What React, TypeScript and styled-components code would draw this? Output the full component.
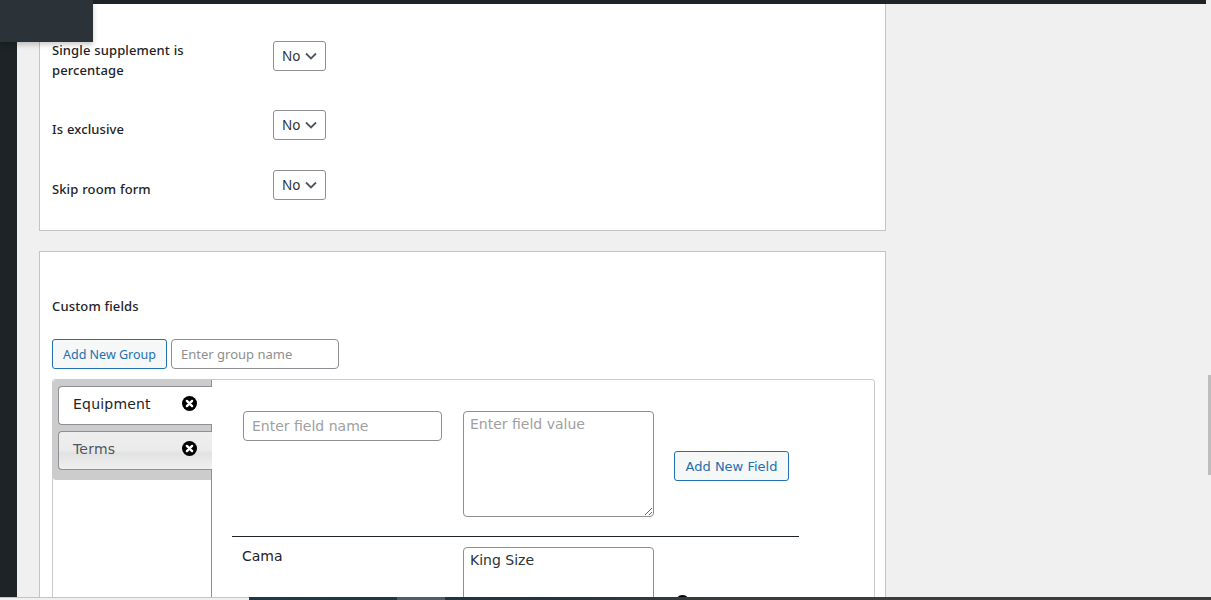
import React from "react";
import styled, { createGlobalStyle } from "styled-components";

const Global = createGlobalStyle`
  html, body { margin: 0; height: 600px; overflow: hidden; background: #f0f0f1; }
  body { font-family: "Noto Sans", sans-serif; color: #1d2327; font-size: 13px; }
  * { box-sizing: border-box; }
`;

const Page = styled.div`
  position: relative;
  display: flex;
  width: 1211px;
  height: 600px;
  overflow: hidden;
  background: #f0f0f1;
`;
const Sidebar = styled.div`
  width: 17px;
  flex: none;
  background: #1d2327;
`;
const Main = styled.main`
  width: 847px;
  margin-left: 22px;
  flex: none;
`;
const TopBar = styled.div`
  position: absolute;
  left: 0;
  top: 0;
  width: 1206px;
  height: 4px;
  background: #1d2327;
`;
const Flyout = styled.div`
  position: absolute;
  left: 0;
  top: 0;
  width: 93px;
  height: 42px;
  background: #2c3338;
  box-shadow: 0 3px 5px rgba(0, 0, 0, 0.2);
`;
const ScrollThumb = styled.div`
  position: absolute;
  right: 0;
  top: 375px;
  width: 3px;
  height: 100px;
  background: #bdbdbd;
`;
const BottomBar = styled.div`
  position: absolute;
  left: 0;
  bottom: 0;
  width: 100%;
  height: 3px;
  background: #f0f0f1;
  border-top: 1px solid #c3c4c7;
`;
const BottomDark = styled.div`
  position: absolute;
  left: 249px;
  right: 0;
  top: -1px;
  height: 3px;
  background: linear-gradient(90deg, #1f3a47 0, #23343d 30%, #3c3c3c 50%, #3c3c3c 100%);
`;
const BottomThumb = styled.div`
  position: absolute;
  left: 397px;
  top: -1px;
  width: 48px;
  height: 3px;
  background: #4f5f68;
`;

const Card = styled.section`
  background: #fff;
  border: 1px solid #c3c4c7;
`;
const SettingsCard = styled(Card)`
  margin-top: 4px;
  height: 227px;
  border-top: 0;
  padding: 16px 12px 0;
  display: flex;
  flex-direction: column;
`;
const FieldsCard = styled(Card)`
  margin-top: 20px;
  height: 400px;
  padding: 0 10px 0 12px;
`;
const Row = styled.div<{ $h: number }>`
  display: grid;
  grid-template-columns: 221px auto;
  justify-content: start;
  align-items: start;
  height: ${(p) => p.$h}px;
  padding-top: 20px;
`;
const Label = styled.div`
  font-weight: 500;
  font-size: 13px;
  line-height: 20px;
  width: 150px;
  letter-spacing: 0.1px;
  word-spacing: 0.4px;
`;
const SelectBox = styled.div<{ $offset: number }>`
  width: 53px;
  height: 30px;
  margin-top: ${(p) => p.$offset}px;
  border: 1px solid #8c8f94;
  border-radius: 3px;
  display: flex;
  align-items: center;
  justify-content: space-between;
  padding: 0 8px 0 8px;
  font-size: 13.5px;
  color: #2c3338;
  background: #fff;
`;
const Chevron = styled.svg`
  width: 12px;
  height: 8px;
  flex: none;
`;
const SectionTitle = styled.h3`
  margin: 0;
  padding-top: 44px;
  font-weight: 500;
  font-size: 13px;
  letter-spacing: 0.15px;
  line-height: 20px;
  height: 87px;
`;
const GroupBar = styled.div`
  display: flex;
  gap: 4px;
  height: 30px;
`;
const Button = styled.button`
  height: 30px;
  padding: 0;
  border: 1px solid #2271b1;
  border-radius: 3px;
  background: #f6f7f7;
  color: #2271b1;
  font-family: "Noto Sans", sans-serif;
  font-size: 12.5px;
`;
const GroupButton = styled(Button)`
  width: 115px;
`;
const FieldButton = styled(Button)`
  width: 115px;
  margin-top: 40px;
  font-family: "DejaVu Sans", sans-serif;
  font-size: 13px;
`;
const GroupInput = styled.input`
  width: 168px;
  height: 30px;
  border: 1px solid #8c8f94;
  border-radius: 4px;
  padding: 0 9px;
  font-family: "Noto Sans", sans-serif;
  font-size: 13px;
  &::placeholder { color: #8f8f8f; opacity: 1; }
`;
const Tabs = styled.div`
  margin-top: 10px;
  height: 300px;
  border: 1px solid #ccc;
  border-radius: 3px 3px 0 0;
  display: flex;
`;
const TabColumn = styled.div`
  width: 159px;
  flex: none;
  border-right: 1px solid #8c8f94;
`;
const TabList = styled.div`
  height: 100px;
  background: #ccc;
  border-radius: 3px 0 0 3px;
  padding: 6px 0 0 5px;
  display: flex;
  flex-direction: column;
  gap: 6px;
`;
const Tab = styled.div<{ $active?: boolean }>`
  height: 39px;
  margin-right: -1px;
  display: flex;
  align-items: flex-start;
  justify-content: space-between;
  padding: 7px 15px 0 14px;
  border: 1px solid #8c8f94;
  border-right: 0;
  border-radius: 4px 0 0 4px;
  background: ${(p) => (p.$active ? "#fff" : "linear-gradient(180deg, #eeeeee 0%, #ebebeb 48%, #e2e2e2 58%, #f0f0f0 100%)")};
  color: ${(p) => (p.$active ? "#1d2327" : "#50575e")};
  font-family: "DejaVu Sans", sans-serif;
  font-size: 14px;
  letter-spacing: 0.2px;
  line-height: 20px;
`;
const CloseIcon = styled.svg`
  width: 15px;
  height: 15px;
  display: block;
  flex: none;
  margin-top: 2px;
`;
const Pane = styled.div`
  flex: 1;
  min-width: 0;
  padding: 31px 0 0 20px;
`;
const FieldRow = styled.div`
  display: flex;
  align-items: flex-start;
  padding: 0 0 0 11px;
`;
const FieldInput = styled.input`
  width: 199px;
  height: 30px;
  margin-right: 21px;
  border: 1px solid #8c8f94;
  border-radius: 4px;
  padding: 0 8px;
  font-family: "DejaVu Sans", sans-serif;
  font-size: 14px;
  &::placeholder { color: #a0a0a0; opacity: 1; }
`;
const FieldValue = styled.textarea`
  width: 191px;
  height: 106px;
  margin: 0 20px 0 0;
  border: 1px solid #8c8f94;
  border-radius: 4px;
  padding: 2px 6px;
  font-family: "DejaVu Sans", sans-serif;
  font-size: 14px;
  line-height: 20px;
  color: #2c3338;
  display: block;
  flex: none;
  &::placeholder { color: #a0a0a0; opacity: 1; }
`;
const Rule = styled.hr`
  width: 567px;
  height: 1px;
  margin: 19px 0 10px;
  border: 0;
  background: #1d2327;
`;
const FieldName = styled.div`
  width: 221px;
  flex: none;
  margin-left: -1px;
  font-family: "DejaVu Sans", sans-serif;
  font-size: 14px;
  line-height: 18px;
`;
const RemoveSlot = styled.div`
  margin-top: 46px;
  margin-left: 1px;
  flex: none;
`;

function Select({ offset }: { offset: number }) {
  return (
    <SelectBox $offset={offset}>
      No
      <Chevron viewBox="0 0 12 8" fill="none">
        <path d="M1 1.5l5 5 5-5" stroke="#50575e" strokeWidth="1.8" />
      </Chevron>
    </SelectBox>
  );
}

function Close() {
  return (
    <CloseIcon viewBox="0 0 15 15">
      <circle cx="7.5" cy="7.5" r="7.5" fill="#000" />
      <path d="M4.9 4.9l5.2 5.2M10.1 4.9l-5.2 5.2" stroke="#fff" strokeWidth="2.4" strokeLinecap="round" />
    </CloseIcon>
  );
}

export default function App() {
  return (
    <Page>
      <Global />
      <Sidebar />
      <Main>
        <SettingsCard>
          <Row $h={79}>
            <Label>Single supplement is percentage</Label>
            <Select offset={1} />
          </Row>
          <Row $h={60}>
            <Label>Is exclusive</Label>
            <Select offset={-9} />
          </Row>
          <Row $h={60}>
            <Label>Skip room form</Label>
            <Select offset={-9} />
          </Row>
        </SettingsCard>
        <FieldsCard>
          <SectionTitle>Custom fields</SectionTitle>
          <GroupBar>
            <GroupButton>Add New Group</GroupButton>
            <GroupInput placeholder="Enter group name" />
          </GroupBar>
          <Tabs>
            <TabColumn>
              <TabList>
                <Tab $active>
                  Equipment
                  <Close />
                </Tab>
                <Tab>
                  Terms
                  <Close />
                </Tab>
              </TabList>
            </TabColumn>
            <Pane>
              <FieldRow>
                <FieldInput placeholder="Enter field name" />
                <FieldValue placeholder="Enter field value" />
                <FieldButton>Add New Field</FieldButton>
              </FieldRow>
              <Rule />
              <FieldRow>
                <FieldName>Cama</FieldName>
                <FieldValue defaultValue="King Size" />
                <RemoveSlot>
                  <Close />
                </RemoveSlot>
              </FieldRow>
            </Pane>
          </Tabs>
        </FieldsCard>
      </Main>
      <TopBar />
      <Flyout />
      <ScrollThumb />
      <BottomBar>
        <BottomDark />
        <BottomThumb />
      </BottomBar>
    </Page>
  );
}
